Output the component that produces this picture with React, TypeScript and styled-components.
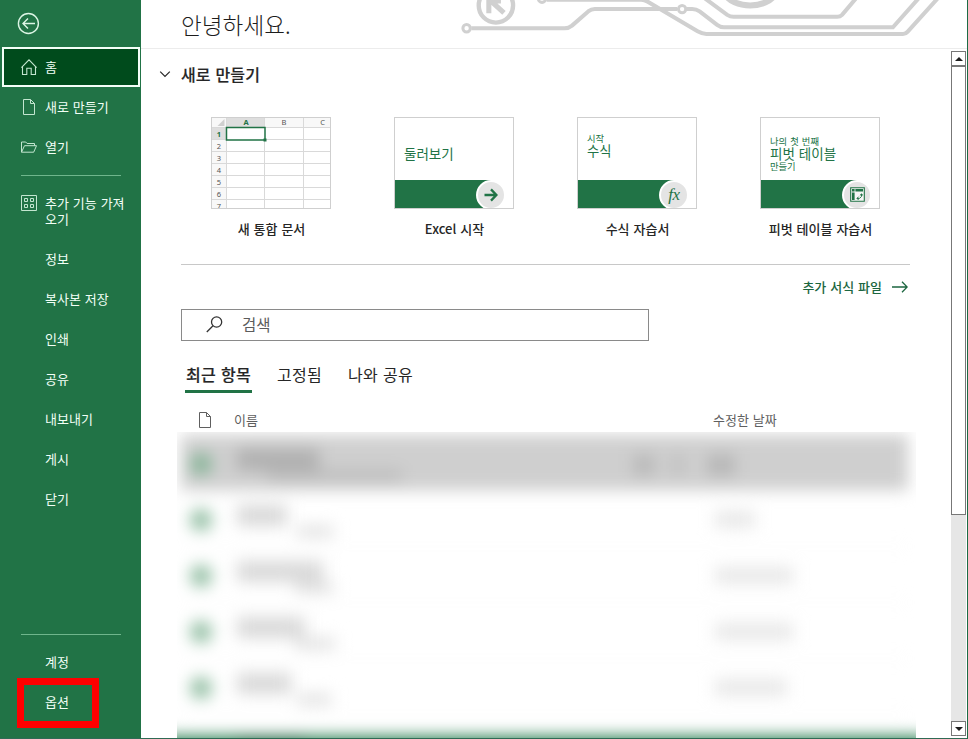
import React from "react";
import styled, { createGlobalStyle } from "styled-components";

const GREEN = "#217346";

const Global = createGlobalStyle`
  * { box-sizing: border-box; }
  body {
    margin: 0;
    background: #fff;
    font-family: "Noto Sans CJK KR", "Noto Sans", sans-serif;
    font-size: 13px;
    line-height: 16px;
    word-spacing: 1px;
    color: #262626;
  }
`;

const Window = styled.div`
  display: flex;
  width: 968px;
  height: 739px;
  overflow: hidden;
  border-right: 1px solid #1c6b45;
  border-bottom: 1px solid #2f6b55;
`;

/* ---------- Sidebar ---------- */

const Sidebar = styled.nav`
  width: 141px;
  height: 739px;
  flex: none;
  display: flex;
  flex-direction: column;
  background: ${GREEN};
  color: #f2fff6;
`;

const BackRow = styled.div`
  height: 47px;
  flex: none;
  padding: 12px 0 0 17px;
  color: #dcf5e5;
`;

const NavItem = styled.div<{ $active?: boolean; $top?: boolean }>`
  display: flex;
  flex: none;
  align-items: ${(p) => (p.$top ? "flex-start" : "center")};
  height: ${(p) => (p.$top ? 56 : 40)}px;
  margin: 0 1px 0 2px;
  padding-top: ${(p) => (p.$top ? 12 : 0)}px;
  padding-left: ${(p) => (p.$active ? 17 : 19)}px;
  border: ${(p) => (p.$active ? "2px solid #f4fff8" : "0")};
  background: ${(p) => (p.$active ? "#004b1c" : "transparent")};
`;

const NavIcon = styled.span`
  width: 16px;
  height: 16px;
  margin-right: 8px;
  flex: none;
  color: #c3e6d0;
  svg { display: block; }
`;

const NavLabel = styled.span`
  width: 88px;
`;

const NavRule = styled.div<{ $bottom?: boolean }>`
  height: 1px;
  flex: none;
  margin: ${(p) => (p.$bottom ? "auto 20px 7px 21px" : "8px 20px 7px 21px")};
  background: #6fb68c;
`;

const Options = styled.div`
  position: relative;
  height: 57px;
  flex: none;
`;

const RedFrame = styled.div`
  position: absolute;
  left: 17px;
  top: -4px;
  width: 82px;
  height: 50px;
  border: 7px solid #fe0000;
`;

/* ---------- Main ---------- */

const Main = styled.main`
  flex: 1;
  min-width: 0;
  display: flex;
  flex-direction: column;
`;

const Header = styled.header`
  height: 49px;
  flex: none;
  display: flex;
  justify-content: space-between;
  border-bottom: 1px solid #ececec;
  svg { display: block; flex: none; }
`;

const Greeting = styled.h1`
  margin: 0 0 0 40px;
  font-size: 22.5px;
  line-height: 49px;
  font-weight: 300;
  color: #1c1c1c;
  letter-spacing: 0.1px;
`;

const Body = styled.div`
  flex: 1;
  min-height: 0;
  display: flex;
  justify-content: space-between;
`;

const Content = styled.div`
  width: 775px;
  display: flex;
  flex-direction: column;
`;

const SectionTitle = styled.h2`
  display: flex;
  align-items: center;
  gap: 10px;
  height: 20px;
  margin: 15px 0 0 18px;
  font-size: 16px;
  line-height: 20px;
  font-weight: 500;
  letter-spacing: 0.15px;
  -webkit-text-stroke: 0.15px currentColor;
`;

const Cards = styled.div`
  display: grid;
  grid-template-columns: repeat(4, 183px);
  margin: 33px 0 0 39px;
  height: 147px;
`;

const Card = styled.div`
  display: flex;
  flex-direction: column;
  align-items: center;
`;

const Thumb = styled.div`
  display: flex;
  flex-direction: column;
  width: 120px;
  height: 92px;
  margin-right: 1px;
  overflow: hidden;
  border: 1px solid #cfcfcf;
  background: #fff;
  color: ${GREEN};
`;

const Caption = styled.div`
  margin-top: 12px;
  font-weight: 500;
`;

const ThumbText = styled.div<{ $top: number }>`
  height: 62px;
  flex: none;
  padding: ${(p) => p.$top}px 0 0 9px;
  white-space: nowrap;
`;

const Line = styled.div<{ $size: number; $h: number }>`
  font-size: ${(p) => p.$size}px;
  line-height: ${(p) => p.$h}px;
`;

const Band = styled.div`
  display: flex;
  justify-content: flex-end;
  align-items: center;
  width: 96px;
  height: 29px;
  flex: none;
  background: ${GREEN};
`;

const Disc = styled.div`
  display: flex;
  align-items: center;
  justify-content: center;
  width: 30px;
  height: 30px;
  flex: none;
  margin-right: -15px;
  border: 2px solid #fff;
  border-radius: 50%;
  background: #e4e4e4;
`;

const Fx = styled.span`
  font: italic 17px/20px "Liberation Serif", serif;
  letter-spacing: -0.5px;
`;

const Rule = styled.div`
  height: 1px;
  flex: none;
  margin: 0 6px 0 40px;
  background: #c8c8c8;
`;

const MoreLink = styled.div`
  display: flex;
  justify-content: flex-end;
  align-items: center;
  gap: 10px;
  height: 16px;
  flex: none;
  margin: 14px 8px 0 0;
  color: #1c6640;
  font-weight: 500;
`;

const Search = styled.div`
  display: flex;
  align-items: center;
  gap: 19px;
  width: 468px;
  height: 32px;
  flex: none;
  margin: 14px 0 0 40px;
  padding: 0 0 2px 24px;
  border: 1px solid #8a8a8a;
  font-size: 15.5px;
  color: #5c5c5c;
`;

const Tabs = styled.div`
  display: flex;
  gap: 24px;
  height: 30px;
  flex: none;
  margin: 22px 0 0 44px;
`;

const Tab = styled.div<{ $active?: boolean }>`
  height: 30px;
  padding: 0 1px;
  font-size: 16px;
  line-height: 23px;
  letter-spacing: 0.3px;
  font-weight: ${(p) => (p.$active ? 500 : 400)};
  -webkit-text-stroke: ${(p) => (p.$active ? "0.2px currentColor" : "0")};
  border-bottom: ${(p) => (p.$active ? `3px solid ${GREEN}` : "0")};
`;

const ListHead = styled.div`
  display: flex;
  align-items: center;
  height: 16px;
  flex: none;
  margin: 19px 0 0 56px;
  color: #5f5f5f;
`;

const HeadName = styled.span`
  width: 479px;
  margin-left: 21px;
`;

const Redacted = styled.div`
  flex: 1;
  min-height: 0;
  width: 739px;
  margin: 4px 0 -1px 36px;
  overflow: hidden;
`;

const Rows = styled.div`
  height: 350px;
  padding: 3px 8px 0 4px;
  filter: blur(8px);
`;

const FileRow = styled.div<{ $selected?: boolean }>`
  display: flex;
  height: 56px;
  padding-left: 9px;
  background: ${(p) => (p.$selected ? "#cfcfcf" : "transparent")};
  border-bottom: 1px solid #f4f4f4;
`;

const FileIcon = styled.div<{ $selected?: boolean }>`
  width: 22px;
  height: 22px;
  flex: none;
  margin: 18px 25px 0 0;
  border-radius: 50%;
  background: ${(p) => (p.$selected ? "#86b497" : "#90bda1")};
`;

const Names = styled.div`
  width: 390px;
  flex: none;
  padding-top: 14px;
`;

const Smudge = styled.div<{ $w: number; $h: number; $ml?: number; $c: string }>`
  width: ${(p) => p.$w}px;
  height: ${(p) => p.$h}px;
  margin-left: ${(p) => p.$ml ?? 0}px;
  background: ${(p) => p.$c};
`;

const Dates = styled.div`
  display: flex;
  padding-top: 20px;
`;

const BottomEdge = styled.div`
  display: flex;
  height: 60px;
  margin: 21px -20px 0 -20px;
  padding-left: 76px;
  background: #2c8153;
`;

/* ---------- Scrollbar ---------- */

const Scrollbar = styled.div`
  display: flex;
  flex-direction: column;
  width: 15px;
  height: 685px;
  margin: 2px 1px 0 0;
  background: #e6e6e6;
`;

const ScrollButton = styled.div`
  display: flex;
  align-items: center;
  justify-content: center;
  height: 15px;
  flex: none;
  border: 1px solid #777;
  background: #fff;
`;

const ScrollThumb = styled.div`
  height: 449px;
  border: 1px solid #777;
  background: #fff;
  margin-bottom: auto;
`;

/* ---------- Icons ---------- */

const stroke = { fill: "none", stroke: "currentColor" };

const BackIcon = () => (
  <svg width="23" height="23" viewBox="0 0 23 23" {...stroke} strokeWidth="1.4">
    <circle cx="11.4" cy="11.5" r="10" />
    <path d="M6 11.5h12M11 6.5l-5 5 5 5" />
  </svg>
);

const HomeIcon = () => (
  <svg width="16" height="16" viewBox="0 0 16 16" {...stroke} strokeWidth="1.1">
    <path d="M.4 8.6 8 .9l7.6 7.7M1.5 7.6v7.9h4.3V9.3h4.4v6.2h4.3V7.6" />
  </svg>
);

const PageIcon = () => (
  <svg width="16" height="16" viewBox="0 0 16 16" {...stroke}>
    <path d="M2.5.5h7l4 4v11h-11zM9.5.5v4h4" />
  </svg>
);

const FolderIcon = () => (
  <svg width="16" height="16" viewBox="0 0 16 16" {...stroke}>
    <path d="M.5 13.2V3h4.2l1.4 1.5h7.4v2.2M.5 13.2l3-6.5h12l-2.8 6.5z" />
  </svg>
);

const AddinsIcon = () => (
  <svg width="16" height="16" viewBox="0 0 16 16" {...stroke}>
    <path d="M.5.5h15v15H.5zM3.5 3.5h3v3h-3zM9.5 3.5h3v3h-3zM3.5 9.5h3v3h-3zM9.5 9.5h3v3h-3z" />
  </svg>
);

const ChevronIcon = () => (
  <svg width="12" height="8" viewBox="0 0 12 8" {...stroke} strokeWidth="1.2">
    <path d="m1.2 1.7 4.8 4.8 4.8-4.8" />
  </svg>
);

const SearchIcon = () => (
  <svg width="17" height="17" viewBox="0 0 17 17" fill="none" stroke="#333" strokeWidth="1.3">
    <circle cx="10.6" cy="6" r="5.1" />
    <path d="M7 9.7.8 16" />
  </svg>
);

const LongArrowIcon = () => (
  <svg width="16" height="12" viewBox="0 0 16 12" {...stroke} strokeWidth="1.3">
    <path d="M0 6h15M10 .8 15.2 6 10 11.2" />
  </svg>
);

const BoldArrowIcon = () => (
  <svg width="14" height="14" viewBox="0 0 14 14" {...stroke} strokeWidth="2.3">
    <path d="M.5 7h11.8M7 1.4 12.4 7 7 12.6" />
  </svg>
);

const PivotIcon = () => (
  <svg width="15" height="15" viewBox="0 0 15 15">
    <path d="M.7.7h13.6v13.6H.7z" fill="#f6f6f6" stroke={GREEN} strokeWidth="1.1" />
    <path d="M2 2h2.6v2.6H2zM5.4 2H13v2.6H5.4zM2 5.4h2.6V13H2z" fill={GREEN} />
    <path d="M7 11.4h2.5l2-2V7M8.6 9.7 7 11.4 8.6 13M9.9 8.4 11.5 7 13 8.4" fill="none" stroke={GREEN} />
  </svg>
);

const Circuit = () => (
  <svg width="527" height="48" viewBox="0 0 1565 142.5" fill="none" stroke="#d0d0d0" strokeWidth="12">
    <circle cx="166" cy="16" r="51" strokeWidth="13" />
    <path d="M145 39V3h36M148 0l42 38" strokeWidth="15" />
    <circle cx="79" cy="84" r="11" strokeWidth="9" />
    <path d="M93 84h277q12 0 22-8l48-42q9-7 20-7h244" />
    <circle cx="303" cy="-4" r="11" strokeWidth="9" />
    <path d="M317-1h280q10 0 20 6l148 88q14 8 26 8h584q8 0 14-7l90-100" />
    <circle cx="719" cy="27" r="11" strokeWidth="9" />
    <path d="M733 27h16q12 0 22 7l52 40q9 7 20 7h502L1424-8" />
    <path d="m785-6 68 50q9 6 19 6h308q8 0 14-6l44-52" />
    <path d="M846-18a79 50 0 0 0 150 0" strokeWidth="18" />
  </svg>
);

const SheetPreview = () => (
  <svg width="118" height="90" viewBox="1 1 118 90" fontFamily="Noto Sans" fontSize="7.5" textAnchor="middle">
    <path d="M0 0h120v10.5H0zM0 0h15.5v92H0z" fill="#f8f8f8" />
    <path d="M15.5 0H54v10.5H15.5zM0 10.5h15.5v12H0z" fill="#dedede" />
    <path d="M13.5 2v7h-7z" fill="#cfcfcf" />
    <path
      d="M15.5 0v92M53.5 0v92M92.5 0v92M0 10.5h120M0 22.5h120M0 34.5h120M0 46.5h120M0 58.5h120M0 70.5h120M0 82.5h120"
      stroke="#d9d9d9"
      fill="none"
    />
    <path d="M15.5 10.5H54V23H15.5z" fill="#fff" stroke={GREEN} strokeWidth="1.5" />
    <path d="M52.5 21.5h3v3h-3z" fill={GREEN} />
    <g fill="#555">
      <text x="35" y="8.2" fontWeight="700" fill={GREEN}>A</text>
      <text x="73" y="8.2">B</text>
      <text x="111.5" y="8.2">C</text>
      <text x="8" y="20" fontWeight="700" fill={GREEN}>1</text>
      {[2, 3, 4, 5, 6, 7].map((n) => (
        <text key={n} x="8" y={8 + n * 12}>{n}</text>
      ))}
    </g>
  </svg>
);

const Triangle = ({ down }: { down?: boolean }) => (
  <svg width="8" height="4" viewBox="0 0 8 4">
    <path d={down ? "M0 0h8L4 4z" : "M0 4h8L4 0z"} fill="#1c1c1c" />
  </svg>
);

/* ---------- Data ---------- */

const plainItems = ["정보", "복사본 저장", "인쇄", "공유", "내보내기", "게시", "닫기"];

const files = [
  { title: 82, subAt: 30, sub: 135, date: 0, selected: true },
  { title: 50, subAt: 60, sub: 36, date: 40 },
  { title: 86, subAt: 58, sub: 38, date: 78 },
  { title: 68, subAt: 58, sub: 40, date: 78 },
  { title: 54, subAt: 60, sub: 34, date: 72 },
];

const Item = ({ label, icon, active, top }: { label: string; icon?: React.ReactNode; active?: boolean; top?: boolean }) => (
  <NavItem $active={active} $top={top}>
    <NavIcon>{icon}</NavIcon>
    <NavLabel>{label}</NavLabel>
  </NavItem>
);

export default function App() {
  return (
    <>
      <Global />
      <Window>
        <Sidebar>
          <BackRow><BackIcon /></BackRow>
          <Item label="홈" icon={<HomeIcon />} active />
          <Item label="새로 만들기" icon={<PageIcon />} />
          <Item label="열기" icon={<FolderIcon />} />
          <NavRule />
          <Item label="추가 기능 가져오기" icon={<AddinsIcon />} top />
          {plainItems.map((t) => <Item key={t} label={t} />)}
          <NavRule $bottom />
          <Item label="계정" />
          <Options>
            <Item label="옵션" />
            <RedFrame />
          </Options>
        </Sidebar>

        <Main>
          <Header>
            <Greeting>안녕하세요.</Greeting>
            <Circuit />
          </Header>
          <Body>
            <Content>
              <SectionTitle><ChevronIcon />새로 만들기</SectionTitle>
              <Cards>
                <Card>
                  <Thumb><SheetPreview /></Thumb>
                  <Caption>새 통합 문서</Caption>
                </Card>
                <Card>
                  <Thumb>
                    <ThumbText $top={26}><Line $size={13.5} $h={18}>둘러보기</Line></ThumbText>
                    <Band><Disc><BoldArrowIcon /></Disc></Band>
                  </Thumb>
                  <Caption>Excel 시작</Caption>
                </Card>
                <Card>
                  <Thumb>
                    <ThumbText $top={15}>
                      <Line $size={9.3} $h={11}>시작</Line>
                      <Line $size={13.3} $h={13}>수식</Line>
                    </ThumbText>
                    <Band><Disc><Fx>fx</Fx></Disc></Band>
                  </Thumb>
                  <Caption>수식 자습서</Caption>
                </Card>
                <Card>
                  <Thumb>
                    <ThumbText $top={18}>
                      <Line $size={9.3} $h={11}>나의 첫 번째</Line>
                      <Line $size={13.5} $h={13}>피벗 테이블</Line>
                      <Line $size={9.3} $h={13}>만들기</Line>
                    </ThumbText>
                    <Band><Disc><PivotIcon /></Disc></Band>
                  </Thumb>
                  <Caption>피벗 테이블 자습서</Caption>
                </Card>
              </Cards>
              <Rule />
              <MoreLink>추가 서식 파일<LongArrowIcon /></MoreLink>
              <Search><SearchIcon />검색</Search>
              <Tabs>
                <Tab $active>최근 항목</Tab>
                <Tab>고정됨</Tab>
                <Tab>나와 공유</Tab>
              </Tabs>
              <ListHead>
                <PageIcon />
                <HeadName>이름</HeadName>
                <span>수정한 날짜</span>
              </ListHead>
              <Redacted>
                <Rows>
                  {files.map((f, i) => (
                    <FileRow key={i} $selected={f.selected}>
                      <FileIcon $selected={f.selected} />
                      <Names>
                        <Smudge $w={f.title} $h={21} $c={f.selected ? "#b0b0b0" : "#d9d9d9"} />
                        <Smudge $w={f.sub} $h={11} $ml={f.subAt} $c={f.selected ? "#bcbcbc" : "#e0e0e0"} />
                      </Names>
                      <Dates>
                        {f.selected ? (
                          <>
                            <Smudge $w={22} $h={20} $ml={6} $c="#b9b9b9" />
                            <Smudge $w={14} $h={20} $ml={16} $c="#c0c0c0" />
                            <Smudge $w={28} $h={20} $ml={22} $c="#b6b6b6" />
                          </>
                        ) : (
                          <Smudge $w={f.date} $h={17} $ml={88} $c="#e8e8e8" />
                        )}
                      </Dates>
                    </FileRow>
                  ))}
                  <BottomEdge><Smudge $w={68} $h={20} $c="#256a45" /></BottomEdge>
                </Rows>
              </Redacted>
            </Content>
            <Scrollbar>
              <ScrollButton><Triangle /></ScrollButton>
              <ScrollThumb />
              <ScrollButton><Triangle down /></ScrollButton>
            </Scrollbar>
          </Body>
        </Main>
      </Window>
    </>
  );
}
